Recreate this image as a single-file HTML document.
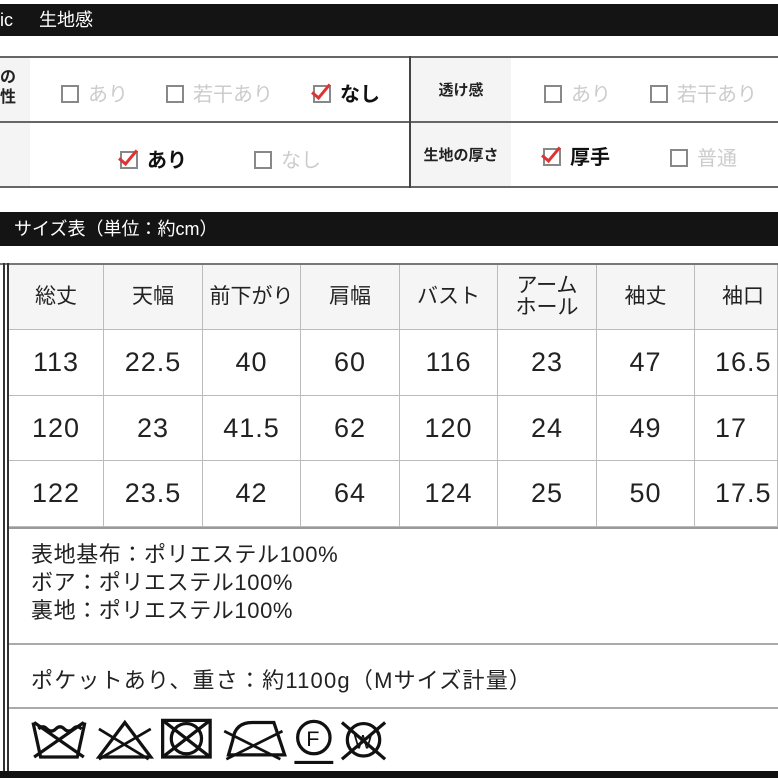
<!DOCTYPE html><html><head><meta charset="utf-8"><style>
*{margin:0;padding:0;box-sizing:border-box}
body{width:778px;height:778px;overflow:hidden;background:#fff;position:relative;font-family:"Liberation Sans","Noto Sans CJK JP",sans-serif;color:#222}
.a{position:absolute}
.bar{position:absolute;left:0;width:778px;background:#141414;color:#fff;font-size:18px}
.h{position:absolute;height:2px;background:#666}
.v{position:absolute;width:2px;background:#444}
.cb{display:inline-block;width:18px;height:18px;border:2.5px solid #888;vertical-align:-2px;margin-right:9px;position:relative}
.cb.on::after{content:"";position:absolute;left:1px;top:-7px;width:7px;height:16px;border-right:3px solid #d33;border-bottom:3px solid #d33;transform:rotate(40deg)}
.opt{position:absolute;font-size:20px;color:#ccc}
.opt.b{color:#111;font-weight:bold}
.lab{position:absolute;background:#f4f4f4;font-size:15px;font-weight:bold;color:#222;display:flex;align-items:center;justify-content:center}
.cell{position:absolute;display:flex;align-items:center;justify-content:center;border-right:1.5px solid #bbb;border-bottom:1.5px solid #bbb;font-size:27px;letter-spacing:1px;color:#222}
.hd{background:#f5f5f5;font-size:21px;line-height:22px;text-align:center;letter-spacing:0}
</style></head><body>
<div class="bar" style="top:4px;height:32px;line-height:32px;padding-left:0">ic<span style="margin-left:26px">生地感</span></div>
<div class="h" style="top:56px;left:0;width:778px"></div>
<div class="h" style="top:121px;left:0;width:778px"></div>
<div class="h" style="top:186px;left:0;width:778px"></div>
<div class="v" style="top:56px;left:409px;height:132px"></div>
<div class="lab" style="left:0;top:58px;width:30px;height:63px;line-height:20px;font-size:16px;justify-content:flex-start;flex-direction:column;padding-top:10px;align-items:flex-start">の<br>性</div>
<div class="lab" style="left:0;top:123px;width:30px;height:63px"></div>
<div class="lab" style="left:411px;top:58px;width:100px;height:63px">透け感</div>
<div class="lab" style="left:411px;top:123px;width:100px;height:63px">生地の厚さ</div>
<div class="opt" style="left:61px;top:78px"><span class="cb"></span>あり</div>
<div class="opt" style="left:166px;top:78px"><span class="cb"></span>若干あり</div>
<div class="opt b" style="left:313px;top:78px"><span class="cb on"></span>なし</div>
<div class="opt b" style="left:120px;top:144px"><span class="cb on"></span>あり</div>
<div class="opt" style="left:254px;top:144px"><span class="cb"></span>なし</div>
<div class="opt" style="left:544px;top:78px"><span class="cb"></span>あり</div>
<div class="opt" style="left:650px;top:78px"><span class="cb"></span>若干あり</div>
<div class="opt b" style="left:543px;top:141px"><span class="cb on"></span>厚手</div>
<div class="opt" style="left:670px;top:142px"><span class="cb"></span>普通</div>
<div class="bar" style="top:212px;height:34px;line-height:34px;padding-left:14px">サイズ表（単位：約cm）</div>
<div class="h" style="top:263px;left:0;width:778px;background:#777"></div>
<div class="v" style="top:263px;left:3px;height:515px;background:#333;width:1.5px"></div>
<div class="v" style="top:263px;left:7px;height:515px;background:#333;width:1.5px"></div>
<div id="t"></div>
<div class="a" style="left:9px;top:527px;width:769px;height:2px;background:#999"></div>
<div class="a" style="left:31px;top:541px;font-size:22px;line-height:28px;letter-spacing:0.6px;color:#222">表地基布：ポリエステル100%<br>ボア：ポリエステル100%<br>裏地：ポリエステル100%</div>
<div class="a" style="left:9px;top:643px;width:769px;height:2px;background:#aaa"></div>
<div class="a" style="left:31px;top:663px;font-size:22px;letter-spacing:1.2px;color:#222">ポケットあり、重さ：約1100g（Mサイズ計量）</div>
<div class="a" style="left:9px;top:707px;width:769px;height:2px;background:#aaa"></div>
<svg class="a" style="left:28px;top:716px" width="360" height="54" viewBox="0 0 330 50" fill="none" stroke="#111" stroke-width="3">
<path d="M3 6 L10 38 H44 L51 6"/><path d="M8 12 q4 -4 8 0 t8 0 t8 0 t8 0 t8 0"/><path d="M4 6 L50 38 M50 6 L4 38"/>
<path d="M64 38 L88 6 L112 38 Z"/><path d="M64 12 L110 40 M112 12 L64 40" stroke-width="2.5"/>
<path d="M123 4 H167 V38 H123 Z"/><circle cx="145" cy="21" r="14"/><path d="M123 4 L167 38 M167 4 L123 38"/>
<path d="M184 36 L188 22 Q190 6 206 6 H226 L236 36 Z"/><path d="M180 14 L232 40 M234 14 L182 40" stroke-width="2.5"/>
<circle cx="263" cy="20" r="15"/><text x="256" y="28" font-family="Liberation Sans" font-size="20" fill="#111" stroke="none">F</text><path d="M245 43 H281"/>
<circle cx="309" cy="22" r="15"/><text x="300" y="30" font-family="Liberation Sans" font-size="18" fill="#111" stroke="none">W</text><path d="M289 6 L329 40 M329 6 L289 40"/>
</svg>
<div class="a" style="left:0;top:771px;width:778px;height:7px;background:#111"></div>
<script>
var xs=[9,104,203,301,400,498,597,695,778],ys=[265,330,396,461,527];
var d=[["総丈","天幅","前下がり","肩幅","バスト","アーム<br>ホール","袖丈","袖口"],["113","22.5","40","60","116","23","47","16.5"],["120","23","41.5","62","120","24","49","17"],["122","23.5","42","64","124","25","50","17.5"]];
var h="";for(var r=0;r<4;r++)for(var c=0;c<8;c++){h+='<div class="cell'+(r==0?' hd':'')+'" style="left:'+xs[c]+'px;top:'+ys[r]+'px;width:'+(xs[c+1]-xs[c])+'px;height:'+(ys[r+1]-ys[r])+'px;'+(c==7?'justify-content:flex-start;padding-left:'+(r==0?27:20)+'px;':'')+'">'+d[r][c]+'</div>'}
document.getElementById("t").innerHTML=h;
</script>
</body></html>
